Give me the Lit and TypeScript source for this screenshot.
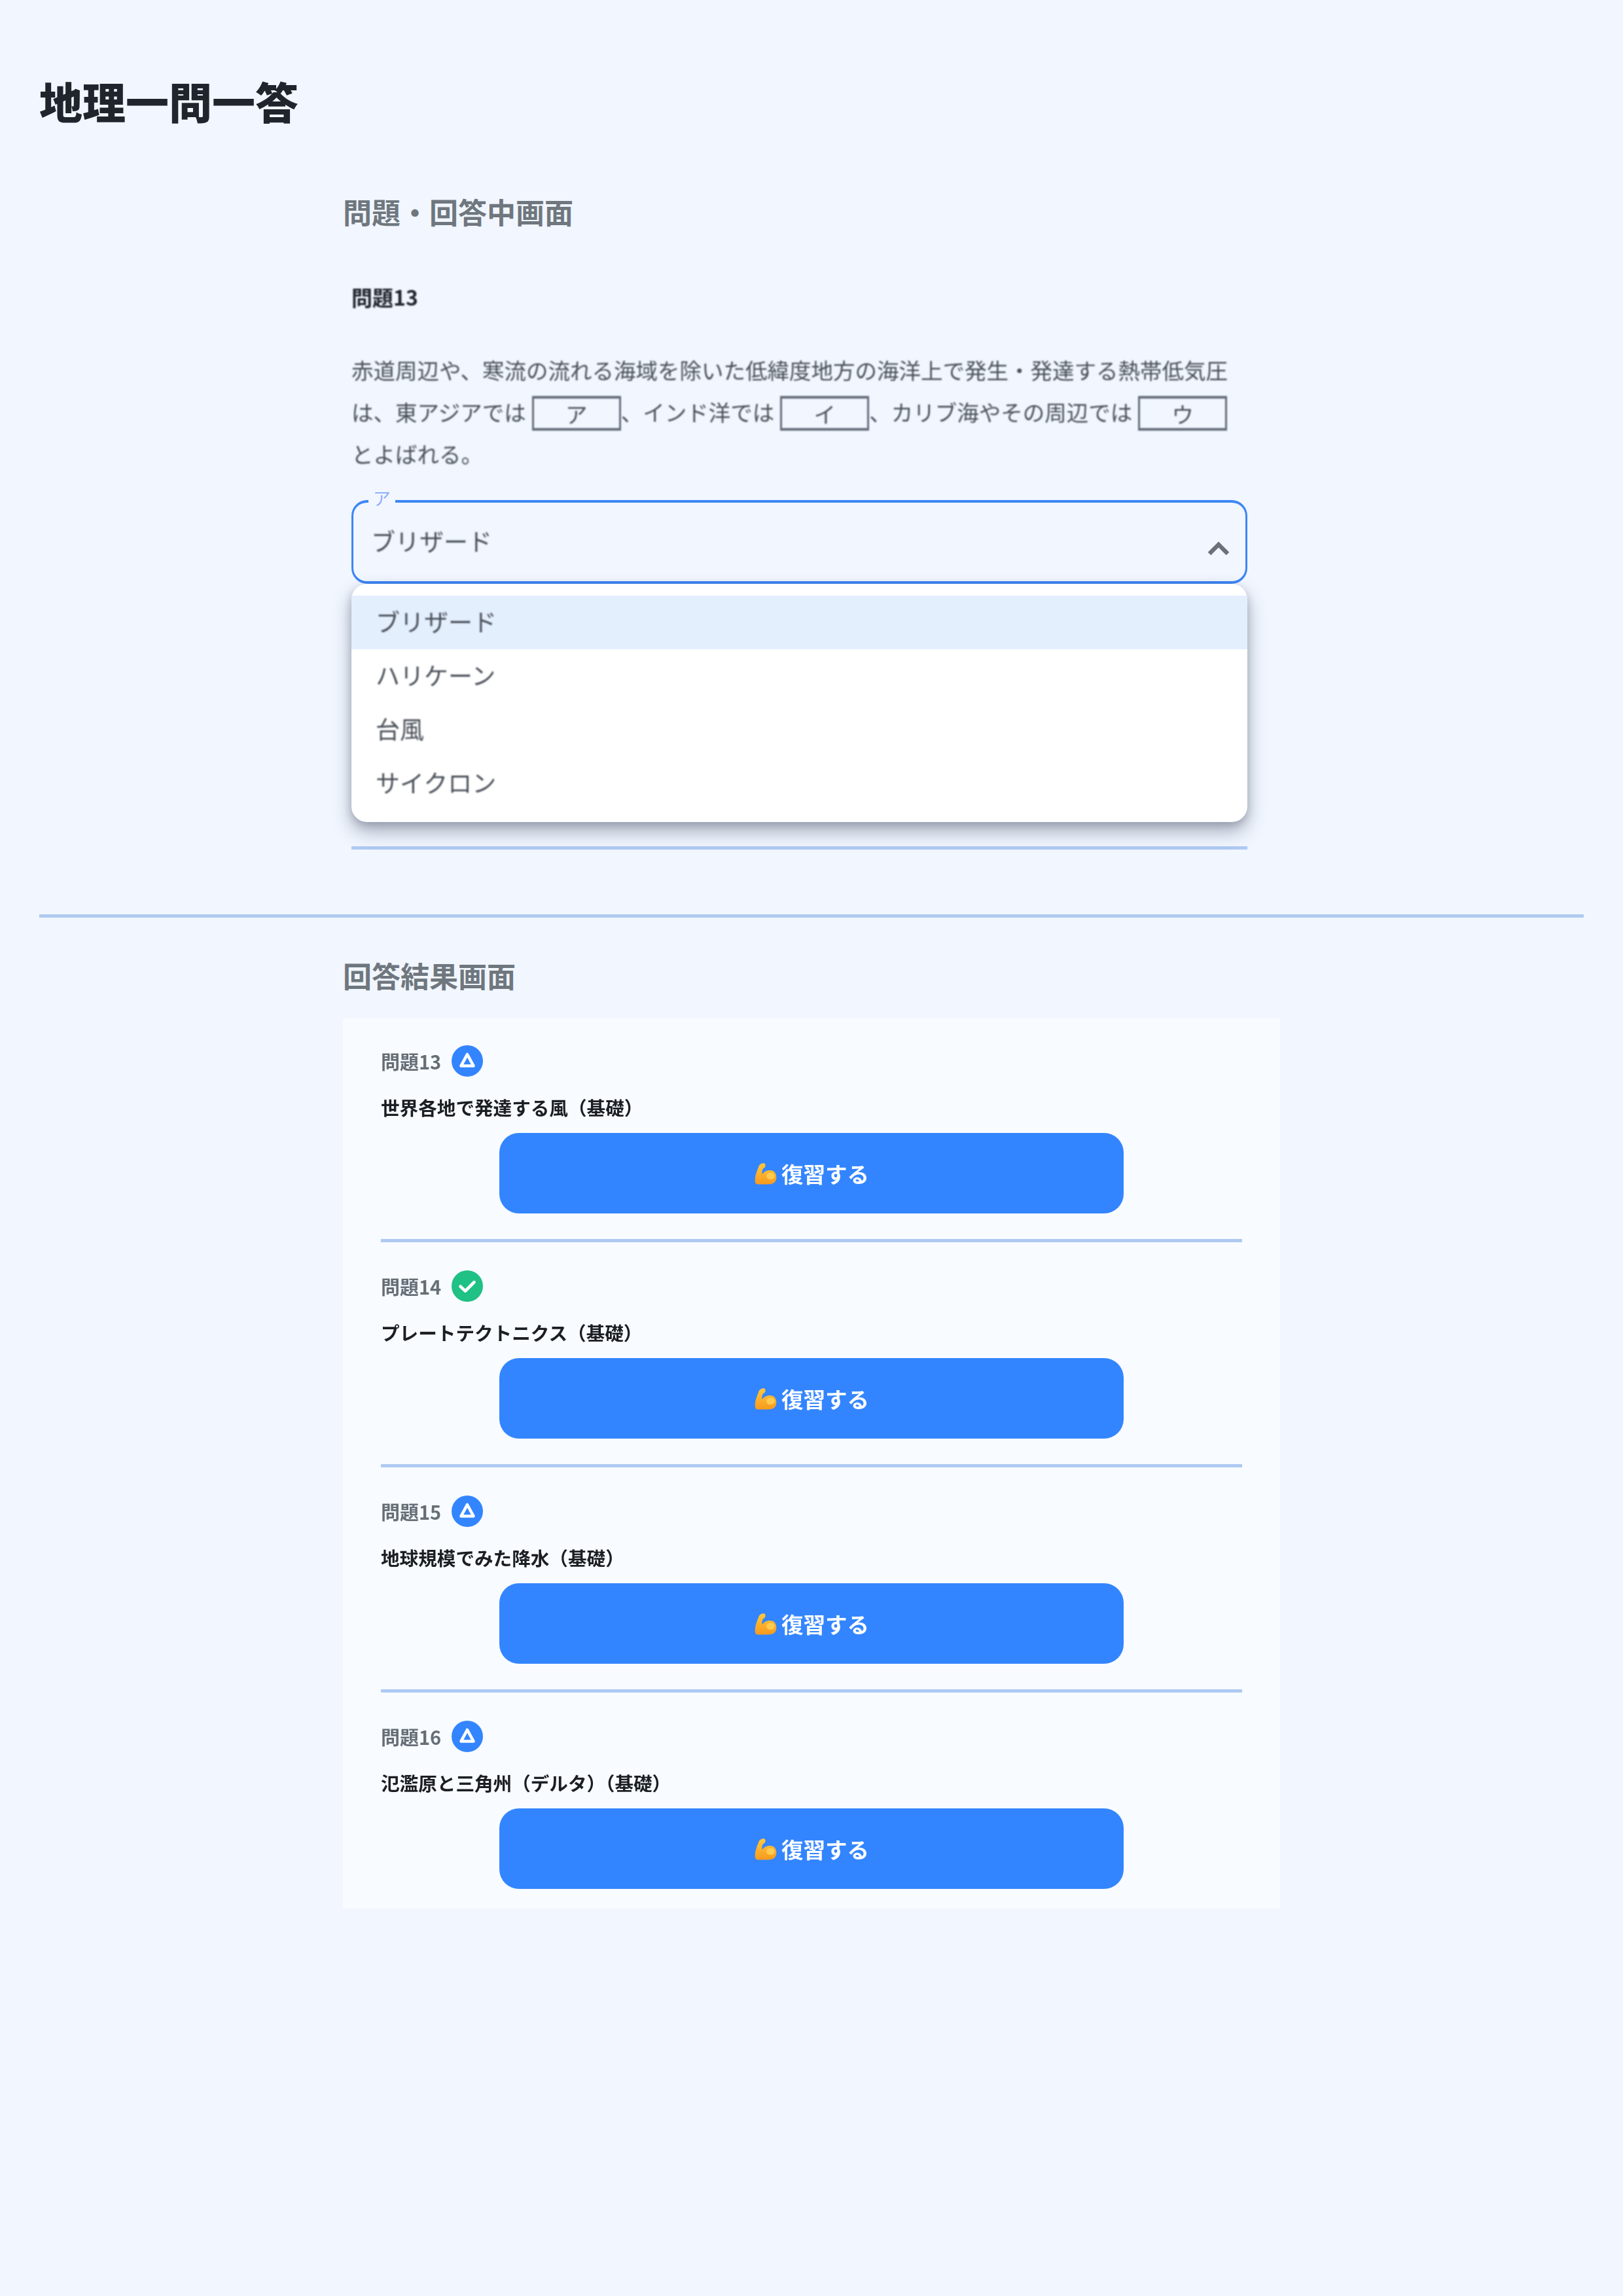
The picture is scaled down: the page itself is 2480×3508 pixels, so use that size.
import { LitElement, html, css } from "lit";
import { customElement } from "lit/decorators.js";

const options = ["ブリザード", "ハリケーン", "台風", "サイクロン"];
const results = [
  { no: "問題13", title: "世界各地で発達する風（基礎）", ok: false },
  { no: "問題14", title: "プレートテクトニクス（基礎）", ok: true },
  { no: "問題15", title: "地球規模でみた降水（基礎）", ok: false },
  { no: "問題16", title: "氾濫原と三角州（デルタ）（基礎）", ok: false },
];

const triangle = html`<svg class="badge" viewBox="0 0 48 48" aria-hidden="true">
  <circle cx="24" cy="24" r="24" fill="#3385ff"></circle>
  <path d="M24 14 L33.5 31.5 H14.5 Z" fill="none" stroke="#fff" stroke-width="4.6" stroke-linejoin="round"></path>
</svg>`;
const check = html`<svg class="badge" viewBox="0 0 48 48" aria-hidden="true">
  <circle cx="24" cy="24" r="24" fill="#1fc184"></circle>
  <path d="M13.5 24.5 L21 31.5 L34.5 18" fill="none" stroke="#fff" stroke-width="4.6" stroke-linecap="round" stroke-linejoin="round"></path>
</svg>`;
const biceps = html`<svg class="emoji" viewBox="0 0 33 32" aria-hidden="true">
  <defs>
    <linearGradient id="arm" x1="0" y1="0" x2="0" y2="1">
      <stop offset="0" stop-color="#ffc83d"></stop>
      <stop offset="1" stop-color="#f79a1e"></stop>
    </linearGradient>
  </defs>
  <path d="M2 29 C0.5 22 4 13 6.5 7 C7.5 2.5 12 0.5 15.5 1.5 C17.5 4 16.5 8 13.5 8.5 C12 11 11 14 12 17 C15 12 22 10 27 12 C32 14 33.5 21 31.5 26 C29.5 31 24 31.5 20 31.5 L6 31.5 C4 31.5 2.5 31 2 29 Z" fill="url(#arm)"></path>
  <ellipse cx="24" cy="19.5" rx="6" ry="5" fill="#ffd65c" opacity=".75"></ellipse>
</svg>`;

@customElement("app-root")
export class AppRoot extends LitElement {
  static styles = css`
    :host {
      display: block;
      min-height: 3508px;
      box-sizing: border-box;
      padding: 113px 60px 0;
      background: #f1f6ff;
      color: #212529;
      font-family: "Noto Sans CJK JP", "Noto Sans", sans-serif;
    }
    h1 {
      margin: 0;
      font-size: 66px;
      line-height: 80px;
      font-weight: 900;
      color: #1f252b;
    }
    .wrap {
      width: 1432px;
      margin: 0 auto;
    }
    h2 {
      margin: 0;
      font-size: 44px;
      line-height: 60px;
      font-weight: 700;
      color: #6f777e;
    }
    .first {
      margin-top: 100px;
    }
    .question {
      margin: 76px 0 0 13px;
      width: 1369px;
    }
    .qno {
      font-size: 32px;
      line-height: 48px;
      font-weight: 700;
      color: #1f242b;
      filter: blur(0.9px);
    }
    .qtext {
      margin: 56px 0 0;
      font-size: 33.5px;
      line-height: 64px;
      color: #4a5059;
      filter: blur(0.9px);
    }
    .blank {
      display: inline-flex;
      align-items: center;
      justify-content: center;
      box-sizing: border-box;
      width: 136px;
      height: 53px;
      margin-left: 9px;
      border-style: solid;
      border-color: #666d7a;
      border-width: 4px 3px;
      vertical-align: 1px;
      line-height: 1;
      position: relative;
      top: 4px;
    }
    .field {
      position: relative;
      margin-top: 39px;
      height: 529px;
      border-bottom: 5px solid #afcaf2;
    }
    .select {
      box-sizing: border-box;
      height: 128px;
      border-style: solid;
      border-color: #3d86f5;
      border-width: 4px 3px;
      border-radius: 24px;
      padding: 32px 27px 0;
      font-size: 37px;
      line-height: 52px;
      color: #4a5059;
    }
    .select-text {
      filter: blur(0.9px);
    }
    .label {
      position: absolute;
      left: 26px;
      top: -20px;
      padding: 0 7px;
      height: 28px;
      background: #f1f6ff;
      font-size: 27px;
      line-height: 34px;
      color: #8fb0fb;
      filter: blur(0.6px);
    }
    .chevron {
      position: absolute;
      right: 26px;
      top: 62px;
      width: 36px;
      height: 24px;
    }
    .menu {
      position: absolute;
      left: 0;
      right: 0;
      top: 128px;
      padding: 18px 0;
      background: #fff;
      border-radius: 24px;
      box-shadow: 0 14px 28px rgba(60, 70, 90, 0.42), 0 4px 12px rgba(60, 70, 90, 0.22);
    }
    .opt {
      height: 82px;
      padding: 0 37px;
      font-size: 37px;
      line-height: 78px;
      color: #4a5059;
    }
    .opt span {
      display: block;
      filter: blur(0.9px);
    }
    .opt.active {
      background: #e4effe;
    }
    .rule {
      height: 5px;
      margin: 99px 0 0;
      background: #afcaf2;
    }
    .second {
      margin-top: 58px;
    }
    .card {
      margin-top: 36px;
      padding: 41px 58px 30px;
      background: #f8fbff;
    }
    .item {
      padding-bottom: 39px;
      margin-bottom: 43px;
      border-bottom: 5px solid #afcaf2;
    }
    .item:last-child {
      padding-bottom: 0;
      margin-bottom: 0;
      border-bottom: 0;
    }
    .head {
      display: flex;
      align-items: center;
      gap: 16px;
      height: 48px;
    }
    .no {
      font-size: 29px;
      font-weight: 700;
      color: #666e76;
      filter: blur(0.5px);
    }
    .badge {
      width: 48px;
      height: 48px;
      display: block;
    }
    .title {
      margin-top: 26px;
      font-size: 28.6px;
      line-height: 42px;
      font-weight: 700;
      color: #1b1f23;
      filter: blur(0.5px);
    }
    .btn {
      display: flex;
      align-items: center;
      justify-content: center;
      gap: 7px;
      width: 954px;
      height: 123px;
      margin: 18px auto 0;
      border-radius: 30px;
      background: #3385ff;
      color: #fff;
      font-size: 33.5px;
      font-weight: 700;
    }
    .btn-text {
      filter: blur(0.5px);
    }
    .emoji {
      width: 35px;
      height: 34px;
      display: block;
    }
  `;

  render() {
    return html`
      <h1>地理一問一答</h1>
      <div class="wrap">
        <h2 class="first">問題・回答中画面</h2>
        <div class="question">
          <div class="qno">問題13</div>
          <p class="qtext">赤道周辺や、寒流の流れる海域を除いた低緯度地方の海洋上で発生・発達する熱帯低気圧は、東アジアでは<span class="blank">ア</span>、インド洋では<span class="blank">イ</span>、カリブ海やその周辺では<span class="blank">ウ</span>とよばれる。</p>
          <div class="field">
            <div class="select"><div class="select-text">ブリザード</div></div>
            <span class="label">ア</span>
            <svg class="chevron" viewBox="0 0 36 24" aria-hidden="true">
              <path d="M4 20 L18 6 L32 20" fill="none" stroke="#6b7178" stroke-width="6.5"></path>
            </svg>
            <div class="menu">
              ${options.map(
                (o, i) => html`<div class="opt ${i === 0 ? "active" : ""}"><span>${o}</span></div>`
              )}
            </div>
          </div>
        </div>
      </div>
      <div class="rule"></div>
      <div class="wrap">
        <h2 class="second">回答結果画面</h2>
        <div class="card">
          ${results.map(
            (r) => html`<div class="item">
              <div class="head">
                <span class="no">${r.no}</span>
                ${r.ok ? check : triangle}
              </div>
              <div class="title">${r.title}</div>
              <div class="btn">${biceps}<span class="btn-text">復習する</span></div>
            </div>`
          )}
        </div>
      </div>
    `;
  }
}
